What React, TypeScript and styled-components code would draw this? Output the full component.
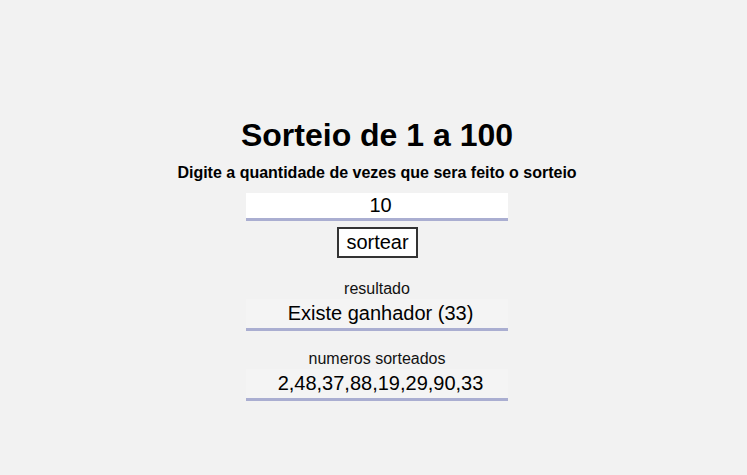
import styled, { createGlobalStyle } from 'styled-components'

const GlobalStyle = createGlobalStyle`
  html, body {
    margin: 0;
    padding: 0;
    background-color: #f2f2f2;
    font-family: 'Liberation Sans', Arial, sans-serif;
  }
`

const numeros = [2, 48, 37, 88, 19, 29, 90, 33]

export default function App() {
  return (
    <>
      <GlobalStyle />
      <Page>
        <Title>Sorteio de 1 a 100</Title>
        <Subtitle>Digite a quantidade de vezes que sera feito o sorteio</Subtitle>
        <Input type="text" defaultValue="10" />
        <Button>sortear</Button>
        <Label $top={22}>resultado</Label>
        <Output>Existe ganhador (33)</Output>
        <Label $top={19}>numeros sorteados</Label>
        <Output>{numeros.join(',')}</Output>
      </Page>
    </>
  )
}

const Page = styled.div`
  display: flex;
  flex-direction: column;
  align-items: center;
  padding: 117px 0 0 7px;
  min-height: 100vh;
  box-sizing: border-box;
  color: #000;
`

const Title = styled.h1`
  margin: 0;
  font-size: 32px;
  line-height: 37px;
  font-weight: bold;
`

const Subtitle = styled.p`
  margin: 10px 0 0;
  font-size: 16px;
  line-height: 18px;
  font-weight: bold;
`

const Input = styled.input`
  margin-top: 11px;
  width: 262px;
  height: 28px;
  box-sizing: border-box;
  border: none;
  border-bottom: 3px solid #aaaed1;
  background-color: #fff;
  font-family: 'Liberation Sans', Arial, sans-serif;
  font-size: 20px;
  line-height: 25px;
  text-align: center;
  padding: 0 0 0 7px;
  outline: none;
  color: #000;
`

const Button = styled.button`
  margin-top: 6px;
  margin-left: 1px;
  padding: 2px 7px;
  border: 2px solid #333;
  background-color: #fff;
  font-family: 'Liberation Sans', Arial, sans-serif;
  font-size: 20px;
  line-height: 23px;
  color: #000;
  cursor: pointer;
`

const Label = styled.div<{ $top: number }>`
  margin-top: ${(p) => p.$top}px;
  font-size: 16px;
  line-height: 18px;
  color: #111;
`

const Output = styled.div`
  margin-top: 1px;
  width: 262px;
  box-sizing: border-box;
  height: 32px;
  padding-left: 7px;
  line-height: 29px;
  border-bottom: 3px solid #aaaed1;
  background-color: #f4f4f4;
  font-size: 20px;
  text-align: center;
`
